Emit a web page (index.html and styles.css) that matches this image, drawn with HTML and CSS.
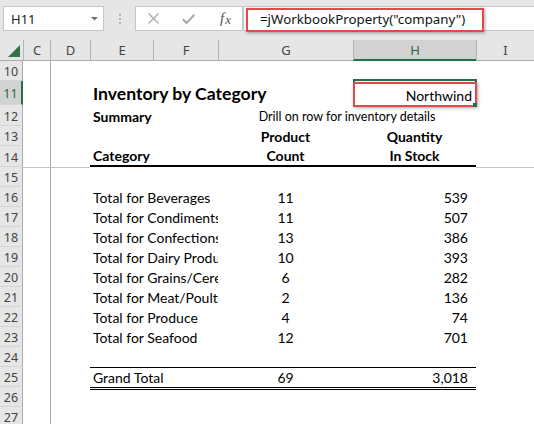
FILE: index.html
```html
<!DOCTYPE html>
<html>
<head>
<meta charset="utf-8">
<link rel="stylesheet" href="styles.css">
</head>
<body>
<div class="toolbar">
  <div class="namebox"><span>H11</span><svg width="7" height="4" viewBox="0 0 7 4"><polygon points="0,0 7,0 3.5,3.5" fill="#707070"/></svg></div>
  <div class="grip"><svg width="2" height="10" viewBox="0 0 2 10"><rect x="0" y="0" width="2" height="2" fill="#b5b5b5"/><rect x="0" y="4" width="2" height="2" fill="#b5b5b5"/><rect x="0" y="8" width="2" height="2" fill="#b5b5b5"/></svg></div>
  <div class="fbtns">
    <svg class="ic-x" width="11" height="11" viewBox="0 0 11 11"><path d="M0.5 0.5L10.5 10.5M10.5 0.5L0.5 10.5" stroke="#a8a8a8" stroke-width="1.3" fill="none"/></svg>
    <svg class="ic-ok" width="13" height="10" viewBox="0 0 13 10"><path d="M0.8 5.2L4.6 9L12.3 0.8" stroke="#a8a8a8" stroke-width="2" fill="none"/></svg>
    <span class="fx">f<span class="fxx">x</span></span>
  </div>
  <div class="finput"><span>=jWorkbookProperty("company")</span><div class="hl"></div></div>
</div>

<div class="sheet">
  <div class="hrow">
    <div class="hc corner"><svg width="12" height="12" viewBox="0 0 12 12"><polygon points="12,0 12,12 0,12" fill="#2f7347"/></svg></div>
    <div class="hc">C</div><div class="hc">D</div><div class="hc">E</div><div class="hc">F</div><div class="hc">G</div><div class="hc sel-h">H</div><div class="hc">I</div>
  </div>

  <div class="row"><div class="rh">10</div><div class="c"></div><div class="c fz"></div><div class="c lbl"></div><div class="c"></div><div class="c"></div><div class="c"></div></div>

  <div class="row r11"><div class="rh sel-r">11</div><div class="c"></div><div class="c fz"></div><div class="c title">Inventory by Category</div><div class="c nw">Northwind<span class="sel"></span><span class="mark"></span><span class="handle"></span></div><div class="c"></div></div>

  <div class="row r21"><div class="rh">12</div><div class="c"></div><div class="c fz"></div><div class="c lbl b">Summary</div><div class="c drill">Drill on row for inventory details</div><div class="c"></div></div>

  <div class="row"><div class="rh">13</div><div class="c"></div><div class="c fz"></div><div class="c lbl"></div><div class="c ctr b">Product</div><div class="c ctr b">Quantity</div><div class="c"></div></div>

  <div class="row r21"><div class="rh">14</div><div class="c"></div><div class="c fz"></div><div class="c lbl b bb">Category</div><div class="c ctr b bb">Count</div><div class="c ctr b bb">In Stock</div><div class="c"></div></div>

  <div class="row"><div class="rh">15</div><div class="c ft"></div><div class="c fz ft"></div><div class="c lbl"></div><div class="c"></div><div class="c"></div><div class="c ft"></div></div>

  <div class="row"><div class="rh">16</div><div class="c"></div><div class="c fz"></div><div class="c lbl">Total for Beverages</div><div class="c ctr">11</div><div class="c rgt">539</div><div class="c"></div></div>
  <div class="row"><div class="rh">17</div><div class="c"></div><div class="c fz"></div><div class="c lbl">Total for Condiments</div><div class="c ctr">11</div><div class="c rgt">507</div><div class="c"></div></div>
  <div class="row"><div class="rh">18</div><div class="c"></div><div class="c fz"></div><div class="c lbl">Total for Confections</div><div class="c ctr">13</div><div class="c rgt">386</div><div class="c"></div></div>
  <div class="row"><div class="rh">19</div><div class="c"></div><div class="c fz"></div><div class="c lbl">Total for Dairy Products</div><div class="c ctr">10</div><div class="c rgt">393</div><div class="c"></div></div>
  <div class="row"><div class="rh">20</div><div class="c"></div><div class="c fz"></div><div class="c lbl">Total for Grains/Cereals</div><div class="c ctr">6</div><div class="c rgt">282</div><div class="c"></div></div>
  <div class="row"><div class="rh">21</div><div class="c"></div><div class="c fz"></div><div class="c lbl">Total for Meat/Poultry</div><div class="c ctr">2</div><div class="c rgt">136</div><div class="c"></div></div>
  <div class="row"><div class="rh">22</div><div class="c"></div><div class="c fz"></div><div class="c lbl">Total for Produce</div><div class="c ctr">4</div><div class="c rgt">74</div><div class="c"></div></div>
  <div class="row"><div class="rh">23</div><div class="c"></div><div class="c fz"></div><div class="c lbl">Total for Seafood</div><div class="c ctr">12</div><div class="c rgt">701</div><div class="c"></div></div>

  <div class="row"><div class="rh">24</div><div class="c"></div><div class="c fz"></div><div class="c lbl"></div><div class="c"></div><div class="c"></div><div class="c"></div></div>

  <div class="row"><div class="rh">25</div><div class="c"></div><div class="c fz"></div><div class="c lbl bt">Grand Total</div><div class="c ctr bt">69</div><div class="c rgt bt">3,018</div><div class="c"></div></div>

  <div class="row"><div class="rh">26</div><div class="c"></div><div class="c fz"></div><div class="c dbl"></div><div class="c"></div></div>

  <div class="row"><div class="rh">27</div><div class="c"></div><div class="c fz"></div><div class="c lbl"></div><div class="c"></div><div class="c"></div><div class="c"></div></div>
</div>
</body>
</html>
```

FILE: styles.css
```css
* { box-sizing: border-box; margin: 0; padding: 0; }

body {
  width: 534px;
  height: 424px;
  overflow: hidden;
  background: #ffffff;
  font-family: Lato, "Liberation Sans", sans-serif;
  color: #000;
}

/* ---------- formula bar ---------- */
.toolbar {
  height: 40px;
  background: #e6e6e6;
  display: flex;
  align-items: flex-start;
  padding-top: 6px;
}

.namebox {
  margin-left: 3px;
  width: 101px;
  height: 25px;
  background: #fff;
  border: 1px solid #c6c6c6;
  display: flex;
  align-items: center;
  justify-content: space-between;
  padding: 1px 5px 0 7px;
  font: 13px "Noto Sans", sans-serif;
  color: #222;
}

.grip {
  width: 31px;
  height: 25px;
  display: flex;
  align-items: center;
  justify-content: center;
}

.fbtns {
  width: 108px;
  height: 25px;
  background: #fff;
  border: 1px solid #c6c6c6;
  display: flex;
  align-items: center;
  padding-left: 12px;
}

.ic-ok { margin-left: 23px; margin-top: 1px; }

.fx {
  margin-left: 25px;
  font: italic 15px "Liberation Serif", serif;
  color: #555;
  display: flex;
  align-items: baseline;
}
.fxx { font-size: 13px; margin-left: 1px; position: relative; top: 1px; }

.finput {
  flex: 1;
  height: 25px;
  background: #fff;
  border: 1px solid #c6c6c6;
  border-right: none;
  position: relative;
  display: flex;
  align-items: center;
  padding: 1px 0 0 16px;
  font: 13.3px "Noto Sans", sans-serif;
  color: #111;
  white-space: nowrap;
}

.hl {
  position: absolute;
  left: 2px;
  top: 1px;
  width: 238px;
  height: 24px;
  border: 2px solid #e8474a;
  box-shadow: 1px 1px 3px rgba(0, 0, 0, 0.35);
}

/* ---------- sheet ---------- */
.hrow, .row {
  display: grid;
  grid-template-columns: 23px 27px 40px 63px 65px 135px 123px 58px;
}

.hrow { height: 21px; background: #e6e6e6; }

.hc {
  border-left: 1px solid #b4b4b4;
  border-bottom: 1px solid #ababab;
  display: flex;
  justify-content: center;
  align-items: flex-end;
  padding-bottom: 3px;
  font: 13px "Noto Sans", sans-serif;
  line-height: 1;
  color: #444;
}

.hc.corner {
  border-left: none;
  justify-content: flex-end;
  padding: 0 3px 3px 0;
}

.hc.sel-h {
  background: #d2d2d2;
  border-bottom: 2px solid #217346;
  color: #1e6b40;
  padding-bottom: 2px;
}

.row { height: 20px; }
.row.r11 { height: 24px; }
.row.r21 { height: 21px; }

.rh {
  background: #e6e6e6;
  border-right: 1px solid #ababab;
  border-bottom: 1px solid #d6d6d6;
  display: flex;
  justify-content: center;
  align-items: flex-end;
  padding-bottom: 2px;
  font: 12.5px "Noto Sans", sans-serif;
  line-height: 1;
  color: #444;
}

.rh.sel-r {
  background: #d2d2d2;
  border-right: 2px solid #217346;
  color: #1e6b40;
  padding-bottom: 4px;
}

.c {
  display: flex;
  align-items: flex-end;
  padding-bottom: 2px;
  font-size: 14px;
  line-height: 1;
  white-space: nowrap;
  overflow: hidden;
}

.fz { border-left: 1px solid #a9a9a9; }
.ft { border-top: 1px solid #c4c4c4; }

.lbl { grid-column: span 2; padding-left: 3px; }
.b { font-weight: 700; }
.ctr { justify-content: center; }
.rgt { justify-content: flex-end; padding-right: 8px; }

.bb { border-bottom: 2px solid #000; }
.bt { border-top: 1px solid #000; }
.dbl { grid-column: 4 / 8; border-top: 3px double #000; }

.title {
  grid-column: span 3;
  padding-left: 3px;
  font-size: 17.6px;
  font-weight: 700;
}

.drill {
  grid-column: span 2;
  justify-content: center;
  font-size: 12.5px;
  padding-bottom: 3px;
}

.nw {
  position: relative;
  overflow: visible;
  justify-content: flex-end;
  padding-right: 4px;
}

.nw .sel {
  position: absolute;
  top: -2px;
  left: 0;
  right: -1px;
  bottom: -2px;
  border: 2px solid #217346;
}

.nw .mark {
  position: absolute;
  top: 1px;
  left: 0;
  right: -1px;
  bottom: -2px;
  border: 2px solid #e8474a;
  box-shadow: 1px 1px 3px rgba(0, 0, 0, 0.35);
}

.nw .handle {
  position: absolute;
  right: -1px;
  bottom: -2px;
  width: 4px;
  height: 4px;
  background: #217346;
}
```
